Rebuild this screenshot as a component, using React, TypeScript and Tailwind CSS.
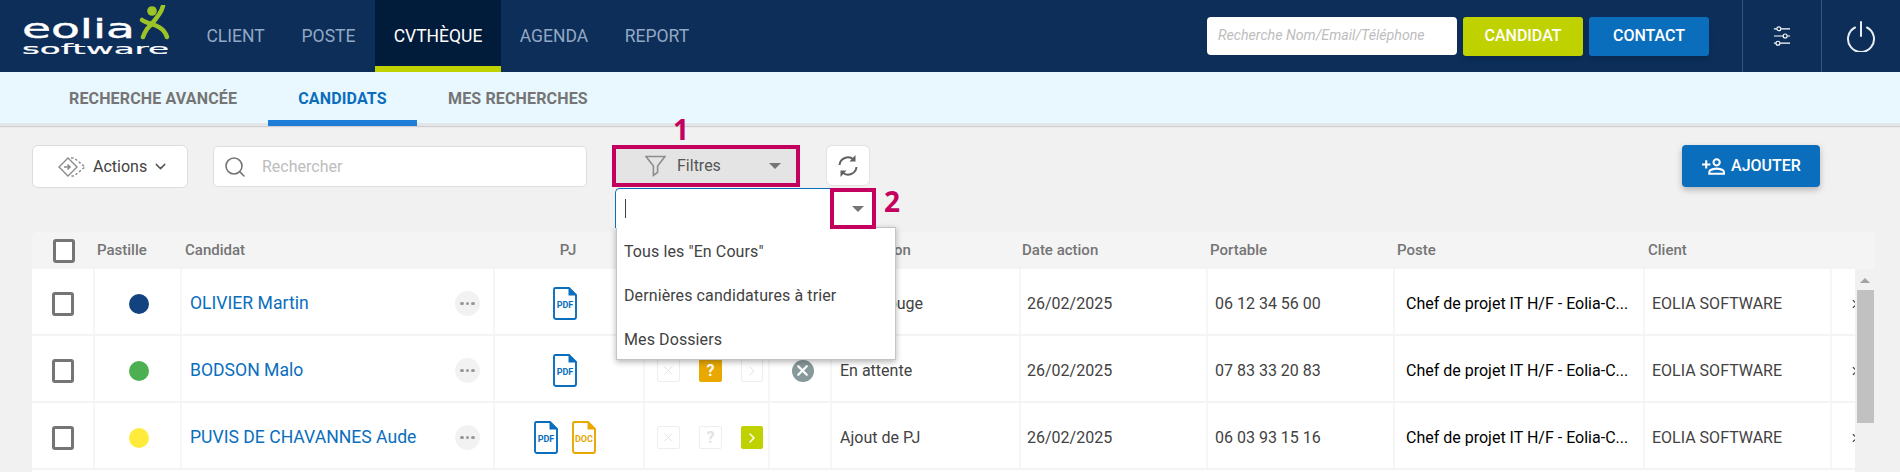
import React from 'react';
import { ChevronDown, Search, X, ChevronRight } from 'lucide-react';
import { MdOutlinePersonAddAlt } from 'react-icons/md';

const Logo = () => (
  <svg width="150" height="62" viewBox="0 0 150 62" className="ml-[22px] shrink-0">
    <text x="0" y="33" textLength="113" lengthAdjust="spacingAndGlyphs" fill="#fff" stroke="#fff" strokeWidth="0.4" fontFamily="DejaVu Sans" fontSize="27">eolia</text>
    <text x="0" y="49" textLength="147" lengthAdjust="spacingAndGlyphs" fill="#fff" stroke="#fff" strokeWidth="0.2" fontFamily="DejaVu Sans" fontSize="13.5">software</text>
    <circle cx="130" cy="6" r="4.8" fill="#9dc427" />
    <path d="M141 1 C139 10 131 17 125 24 C123 27 122 29 121 32" fill="none" stroke="#9dc427" strokeWidth="4.5" strokeLinecap="round" />
    <path d="M120 15 C127 20 141 19 145 32" fill="none" stroke="#9dc427" strokeWidth="4.5" strokeLinecap="round" />
  </svg>
);

const NavItem = ({ label, active, className }: { label: string; active?: boolean; className: string }) => (
  <div
    className={`h-[72px] flex items-center justify-center text-[17.5px] ${className} ${
      active ? 'bg-[#011b3b] text-white border-b-[6px] border-[#c0d100] pt-[6px]' : 'text-[#93a8c4]'
    }`}
  >
    {label}
  </div>
);

const FileIcon = ({ label, color }: { label: string; color: string }) => (
  <svg width="24" height="33" viewBox="0 0 24 33">
    <path d="M2.5 1 H16 L23 8 V30 a2 2 0 0 1 -2 2 H3 a2 2 0 0 1 -2 -2 V2.5 a1.5 1.5 0 0 1 1.5 -1.5 Z" fill="#fff" stroke={color} strokeWidth="1.9" />
    <path d="M15.5 1 V8.5 H23 Z" fill={color} />
    <text x="12" y="20.5" textAnchor="middle" fontFamily="Roboto" fontWeight="700" fontSize="9" fill={color}>{label}</text>
  </svg>
);

const Checkbox = () => <div className="w-[22px] h-[24px] border-[3px] border-[#757575] rounded-[3px] bg-white" />;

const Caret = () => <div className="w-0 h-0 border-x-[6px] border-x-transparent border-t-[6px] border-t-[#757575]" />;

const Box = ({ kind, on }: { kind: 'x' | 'q' | 'next'; on?: string }) => (
  <div
    className={`h-[23px] rounded-[2px] flex items-center justify-center ${kind === 'next' ? 'w-[22px]' : 'w-[23px]'} ${
      on === 'amber' ? 'bg-[#e8a800]' : on === 'lime' ? 'bg-[#c0d100]' : 'border border-[#eeeeee] bg-white'
    } ${on ? 'text-white' : 'text-[#e3e3e3]'}`}
  >
    {kind === 'x' && <X size={15} strokeWidth={1.5} />}
    {kind === 'q' && <span className="text-[16px] font-bold leading-none">?</span>}
    {kind === 'next' && <ChevronRight size={16} strokeWidth={on ? 2.2 : 1.5} />}
  </div>
);

const cols = 'grid grid-cols-[63px_87px_313px_150px_125px_62px_189px_187px_187px_250px_187px_23px]';

interface Row {
  name: string;
  color: string;
  files: Array<[string, string]>;
  q?: string;
  next?: string;
  cancel?: boolean;
  status: string;
  date: string;
  phone: string;
}

const rows: Row[] = [
  { name: 'OLIVIER Martin', color: 'bg-[#12427f]', files: [['PDF', '#0a6ebd']], status: 'Fiche rouge', date: '26/02/2025', phone: '06 12 34 56 00' },
  { name: 'BODSON Malo', color: 'bg-[#4caf50]', files: [['PDF', '#0a6ebd']], q: 'amber', cancel: true, status: 'En attente', date: '26/02/2025', phone: '07 83 33 20 83' },
  { name: 'PUVIS DE CHAVANNES Aude', color: 'bg-[#ffeb3b]', files: [['PDF', '#0a6ebd'], ['DOC', '#e8a800']], next: 'lime', status: 'Ajout de PJ', date: '26/02/2025', phone: '06 03 93 15 16' },
];

const cell = 'flex items-center border-r-2 border-[#f6f6f6] h-full pt-[4px]';

const TableRow = ({ row }: { row: Row }) => (
  <div className={`${cols} h-[65px] mb-[2px] bg-white items-center text-[16px] text-[#424242]`}>
    <div className={`${cell} justify-center pl-[1px]`}><Checkbox /></div>
    <div className={`${cell} justify-center pl-[2px]`}><div className={`w-[20px] h-[20px] rounded-full ${row.color}`} /></div>
    <div className={`${cell} justify-between pl-[8px] pr-[13px]`}>
      <span className="text-[#0a6ebd] text-[17.6px]">{row.name}</span>
      <div className="w-[25px] h-[25px] rounded-full bg-[#f2f2f2] flex items-center justify-center gap-[2px]">
        <i className="block w-[3.5px] h-[3.5px] rounded-full bg-[#999]" />
        <i className="block w-[3.5px] h-[3.5px] rounded-full bg-[#999]" />
        <i className="block w-[3.5px] h-[3.5px] rounded-full bg-[#999]" />
      </div>
    </div>
    <div className={`${cell} justify-center gap-[14px] pr-[8px]`}>
      {row.files.map(([label, color]) => <FileIcon key={label} label={label} color={color} />)}
    </div>
    <div className={`${cell} pl-[12px] gap-[19px]`}>
      <Box kind="x" />
      <Box kind="q" on={row.q} />
      <Box kind="next" on={row.next} />
    </div>
    <div className={`${cell} justify-center pl-[5px]`}>
      {row.cancel && (
        <div className="w-[22px] h-[22px] rounded-full bg-[#87999b] flex items-center justify-center text-white">
          <X size={17} strokeWidth={3.2} />
        </div>
      )}
    </div>
    <div className={`${cell} pl-[8px]`}>{row.status}</div>
    <div className={`${cell} pl-[6px]`}>{row.date}</div>
    <div className={`${cell} pl-[7px]`}>{row.phone}</div>
    <div className={`${cell} pl-[11px] text-black`}>Chef de projet IT H/F - Eolia-C...</div>
    <div className={`${cell} pl-[7px]`}>EOLIA SOFTWARE</div>
    <div className="flex items-center justify-end h-full overflow-hidden text-[#424242] pt-[4px]">
      <ChevronRight size={14} className="shrink-0 translate-x-[7px]" />
    </div>
  </div>
);

export default function App() {
  return (
    <div className="w-[1900px] h-[472px] overflow-hidden bg-[#f1f1f1] font-[Roboto,sans-serif]">
      {/* Top bar */}
      <header className="h-[72px] bg-[#0c2e59] flex items-center">
        <Logo />
        <NavItem label="CLIENT" className="w-[93px] ml-[17px]" />
        <NavItem label="POSTE" className="w-[93px]" />
        <NavItem label="CVTHÈQUE" active className="w-[126px]" />
        <NavItem label="AGENDA" className="w-[106px]" />
        <NavItem label="REPORT" className="w-[100px]" />

        <div className="ml-auto flex items-center">
          <div className="w-[250px] h-[38px] bg-white rounded-[4px] flex items-center pl-[11px] text-[14.2px] italic text-[#bdbdbd] mb-[1px]">
            Recherche Nom/Email/Téléphone
          </div>
          <button className="w-[120px] h-[39px] ml-[6px] rounded-[3px] bg-[#c0d100] text-white text-[16px] font-medium shadow-md">CANDIDAT</button>
          <button className="w-[120px] h-[39px] ml-[6px] rounded-[3px] bg-[#0a6ebd] text-white text-[16px] font-medium shadow-md">CONTACT</button>
          <div className="w-[80px] h-[72px] ml-[33px] border-x border-[#3a5578] flex items-center justify-center">
            <svg width="18" height="22" viewBox="0 0 20 24" fill="none" stroke="#fff" strokeWidth="1.3">
              <path d="M1 4H4M9 4H19M1 12H11M16 12H19M1 20H3M8 20H19" />
              <circle cx="6.5" cy="4" r="2.2" /><circle cx="13.5" cy="12" r="2.2" /><circle cx="5.5" cy="20" r="2.2" />
            </svg>
          </div>
          <div className="w-[78px] flex items-center justify-center">
            <svg width="30" height="32" viewBox="0 0 30 32" fill="none" stroke="#e8edf3" strokeWidth="2" strokeLinecap="round">
              <path d="M15 2V16" />
              <path d="M9 7.5a13 13 0 1 0 12 0" />
            </svg>
          </div>
        </div>
      </header>

      {/* Sub tabs */}
      <nav className="h-[54px] bg-[#e9f8ff] flex border-b-[3px] border-[#e2e6e8] shadow-[0_1px_1px_#cfcfcf] text-[16px] font-bold text-[#757575] tracking-[0.15px]">
        <div className="pl-[69px] pt-[15px] w-[268px]">RECHERCHE AVANCÉE</div>
        <div className="w-[149px] pt-[15px] text-center text-[#0a6ebd] h-[54px] border-b-[6px] border-[#1e7dd6]">CANDIDATS</div>
        <div className="pl-[31px] pt-[15px]">MES RECHERCHES</div>
      </nav>

      {/* Toolbar */}
      <div className="relative h-[106px] pt-[19px] pl-[32px] flex items-start">
        <button className="w-[156px] h-[43px] rounded-[6px] bg-white border border-[#dcdcdc] flex items-center pl-[24px] text-[16px] text-[#424242]">
          <svg width="30" height="22" viewBox="0 0 30 22" fill="none" stroke="#8a8a8a" strokeWidth="1.4" className="mr-[6px]">
            <path d="M11 2 L20 11 L11 20 L2 11 Z" />
            <path d="M14 2 L17 2 L28 11 L17 20 L14 20" strokeDasharray="2.5 2" />
            <path d="M7 11H13M10.5 8.5L13 11L10.5 13.5" strokeWidth="1.6" />
          </svg>
          Actions
          <ChevronDown size={17} className="ml-[5px] text-[#555]" />
        </button>
        <div className="w-[374px] h-[41px] ml-[25px] mt-[1px] rounded-[5px] bg-white border border-[#dedede] flex items-center pl-[9px] text-[16px] text-[#bdbdbd]">
          <Search size={24} strokeWidth={1.6} className="text-[#757575]" />
          <span className="ml-[15px]">Rechercher</span>
        </div>
        <div className="relative w-[188px] h-[42px] ml-[25px] bg-[#e4e4e4] border-[4px] border-[#c4005f] flex items-center text-[16px] text-[#555]">
          <svg width="21" height="24" viewBox="0 0 20 22" fill="none" stroke="#8c8c8c" strokeWidth="1.5" className="ml-[29px] mr-[11px]">
            <path d="M1 2H19L12 11V17L8 20V11Z" />
          </svg>
          Filtres
          <div className="ml-auto mr-[15px]"><Caret /></div>
          <span className="absolute left-[57px] top-[-38px] text-[28px] leading-[36px] font-bold text-[#c4005f] font-['Noto_Sans',sans-serif]">1</span>
        </div>
        <button className="w-[44px] h-[41px] ml-[26px] rounded-[6px] bg-white border border-[#e2e2e2] flex items-center justify-center">
          <svg width="22" height="24" viewBox="0 0 22 24" fill="none" stroke="#616161" strokeWidth="2">
            <path d="M2.5 11 A8.5 8.5 0 0 1 16.5 5.5" />
            <path d="M19.5 13 A8.5 8.5 0 0 1 5.5 18.5" />
            <path d="M18.5 1 V7.5 H12.5 Z" fill="#616161" stroke="none" />
            <path d="M3.5 23 V16.5 H9.5 Z" fill="#616161" stroke="none" />
          </svg>
        </button>
        <button className="absolute left-[1682px] top-[19px] w-[138px] h-[42px] rounded-[4px] bg-[#0a6ebd] text-white text-[16px] font-medium flex items-center justify-center gap-[5px] shadow-[0_3px_6px_rgba(0,0,0,0.25)]">
          <MdOutlinePersonAddAlt size={25} className="-scale-x-100" />
          AJOUTER
        </button>

        {/* Open filter select */}
        <div className="absolute left-[615px] top-[62px] w-[261px] h-[40px] bg-white border-t border-l border-[#0a6ebd] rounded-tl-[5px] flex items-center pl-[9px] z-20">
          <div className="w-px h-[19px] bg-[#424242]" />
        </div>
        <div className="absolute left-[830px] top-[62px] w-[46px] h-[41px] border-[4px] border-[#c4005f] flex items-center justify-center pl-[9px] z-20">
          <Caret />
        </div>
        <span className="absolute left-[884px] top-[57px] text-[28px] leading-[36px] font-bold text-[#c4005f] font-['Noto_Sans',sans-serif] z-20">2</span>
        <div className="absolute left-[616px] top-[101px] w-[280px] h-[133px] bg-white border border-[#c4c4c4] shadow-[0_2px_6px_rgba(0,0,0,0.3)] z-10 pt-[2px] text-[16px] text-[#424242] tracking-[0.1px]">
          <div className="h-[44px] flex items-center pl-[7px]">Tous les "En Cours"</div>
          <div className="h-[44px] flex items-center pl-[7px]">Dernières candidatures à trier</div>
          <div className="h-[44px] flex items-center pl-[7px]">Mes Dossiers</div>
        </div>
      </div>

      {/* Table */}
      <div className="relative ml-[32px] w-[1843px] bg-[#f4f4f4] rounded-t-[5px]">
        <div className={`${cols} h-[37px] items-center text-[15px] font-medium text-[#757575]`}>
          <div className="flex justify-center"><Checkbox /></div>
          <div className="pl-[2px]">Pastille</div>
          <div className="pl-[3px]">Candidat</div>
          <div className="text-center pr-[3px] -ml-[1px]">PJ</div>
          <div />
          <div />
          <div className="pl-[7px]">État action</div>
          <div className="pl-[1px]">Date action</div>
          <div className="pl-[2px]">Portable</div>
          <div className="pl-[2px]">Poste</div>
          <div className="pl-[3px]">Client</div>
          <div />
        </div>
        {rows.map(r => <TableRow key={r.name} row={r} />)}
        <div className={`${cols} h-[10px] bg-white`} />
        {/* Scrollbar */}
        <div className="absolute left-[1823px] top-[37px] bottom-0 w-[20px] bg-[#f1f1f1] flex flex-col items-center pt-[9px]">
          <div className="w-0 h-0 border-x-[5px] border-x-transparent border-b-[5px] border-b-[#a3a3a3]" />
          <div className="w-[17px] h-[133px] bg-[#c1c1c1] mt-[7px]" />
        </div>
      </div>
    </div>
  );
}
